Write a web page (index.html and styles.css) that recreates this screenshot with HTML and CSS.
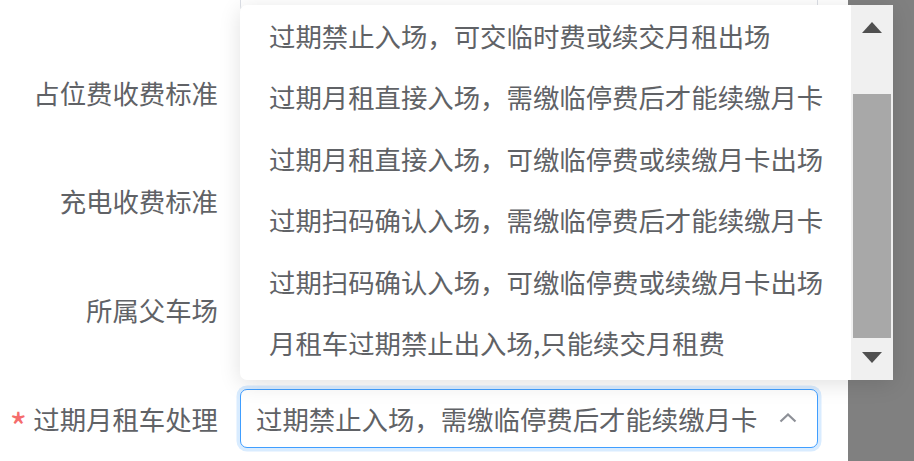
FILE: index.html
```html
<!DOCTYPE html>
<html lang="zh-CN">
<head>
<meta charset="utf-8">
<title>月租车设置</title>
<link rel="stylesheet" href="styles.css">
</head>
<body>
<div class="stage">
  <div class="dialog">
    <form class="form">
      <div class="form-item">
        <label class="form-label"></label>
        <div class="input"><span class="input-text"></span></div>
      </div>
      <div class="form-item">
        <label class="form-label">占位费收费标准</label>
        <div class="input"><span class="input-text"></span></div>
      </div>
      <div class="form-item">
        <label class="form-label">充电收费标准</label>
        <div class="input"><span class="input-text"></span></div>
      </div>
      <div class="form-item">
        <label class="form-label">所属父车场</label>
        <div class="input"><span class="input-text"></span></div>
      </div>
      <div class="form-item">
        <label class="form-label is-required">过期月租车处理</label>
        <div class="input is-focus">
          <span class="input-text">过期禁止入场，需缴临停费后才能续缴月卡</span>
          <svg class="chevron" width="18" height="10" viewBox="0 0 18 10"><polyline points="1.5,8.5 9,1.5 16.5,8.5" fill="none" stroke="#8d9097" stroke-width="2.2"/></svg>
        </div>
      </div>
    </form>
  </div>

  <div class="dropdown">
    <ul class="options">
      <li class="option">过期禁止入场，可交临时费或续交月租出场</li>
      <li class="option">过期月租直接入场，需缴临停费后才能续缴月卡</li>
      <li class="option">过期月租直接入场，可缴临停费或续缴月卡出场</li>
      <li class="option">过期扫码确认入场，需缴临停费后才能续缴月卡</li>
      <li class="option">过期扫码确认入场，可缴临停费或续缴月卡出场</li>
      <li class="option">月租车过期禁止出入场,只能续交月租费</li>
    </ul>
    <div class="scrollbar">
      <div class="sb-btn sb-up"><svg width="20" height="11" viewBox="0 0 20 11"><polygon points="10,0 20,11 0,11" fill="#505050"/></svg></div>
      <div class="sb-track"><div class="sb-thumb"></div></div>
      <div class="sb-btn sb-down"><svg width="20" height="11" viewBox="0 0 20 11"><polygon points="0,0 20,0 10,11" fill="#505050"/></svg></div>
    </div>
  </div>
</div>
</body>
</html>
```

FILE: styles.css
```css
html, body {
  margin: 0;
  padding: 0;
}

body {
  background: #808080;
  font-family: "Noto Sans CJK SC", "Noto Sans", sans-serif;
  color: #606266;
  overflow: hidden;
}

.stage {
  position: relative;
  width: 914px;
  height: 461px;
}

/* dialog body */
.dialog {
  width: 848px;
  height: 461px;
  background: #fff;
  overflow: hidden;
}

.form {
  margin: -46px 0 0;
  padding: 0;
}

.form-item {
  display: flex;
  align-items: center;
  height: 59px;
  margin-bottom: 49.7px;
}

.form-label {
  width: 240px;
  box-sizing: border-box;
  padding-right: 22px;
  text-align: right;
  font-size: 26.4px;
  line-height: 59px;
  color: #606266;
  white-space: nowrap;
}

.form-label.is-required::before {
  content: "*";
  color: #f56c6c;
  margin-right: 6px;
  font-size: 38px;
  line-height: 1;
  display: inline-block;
  vertical-align: -12px;
}

.input {
  width: 578px;
  height: 59px;
  box-sizing: border-box;
  border: 1px solid #dcdfe6;
  border-radius: 7px;
  padding: 0 20px 0 15px;
  display: flex;
  align-items: center;
  justify-content: space-between;
  background: #fff;
}

.input.is-focus {
  border-color: #409eff;
  box-shadow: 0 0 0 3.5px #d9ecff;
}

.input-text {
  font-size: 26.4px;
  color: #606266;
  white-space: nowrap;
}

.chevron {
  display: block;
  margin-right: 0;
}

/* select dropdown */
.dropdown {
  position: absolute;
  left: 240px;
  top: 5px;
  width: 653px;
  height: 375px;
  display: flex;
  background: #fff;
  border-radius: 7px 0 0 7px;
  box-shadow: 0 4px 22px rgba(0, 0, 0, 0.12);
}

.options {
  flex: 1;
  margin: 0;
  padding: 0 0 6.6px;
  list-style: none;
  display: flex;
  flex-direction: column;
  justify-content: flex-end;
  overflow: hidden;
}

.option {
  flex: none;
  height: 61.4px;
  line-height: 61.4px;
  padding-left: 29px;
  font-size: 26.4px;
  color: #606266;
  white-space: nowrap;
}

.scrollbar {
  width: 42px;
  background: #f0f0f0;
  display: flex;
  flex-direction: column;
}

.sb-btn {
  height: 42px;
  box-sizing: border-box;
  display: flex;
  justify-content: center;
}

.sb-btn svg {
  display: block;
}

.sb-up {
  padding-top: 17px;
}

.sb-down {
  padding-top: 14px;
}

.sb-track {
  flex: 1;
  display: flex;
  flex-direction: column;
  justify-content: flex-end;
}

.sb-thumb {
  height: 244px;
  margin: 0 2px;
  background: #a8a8a8;
}
```
